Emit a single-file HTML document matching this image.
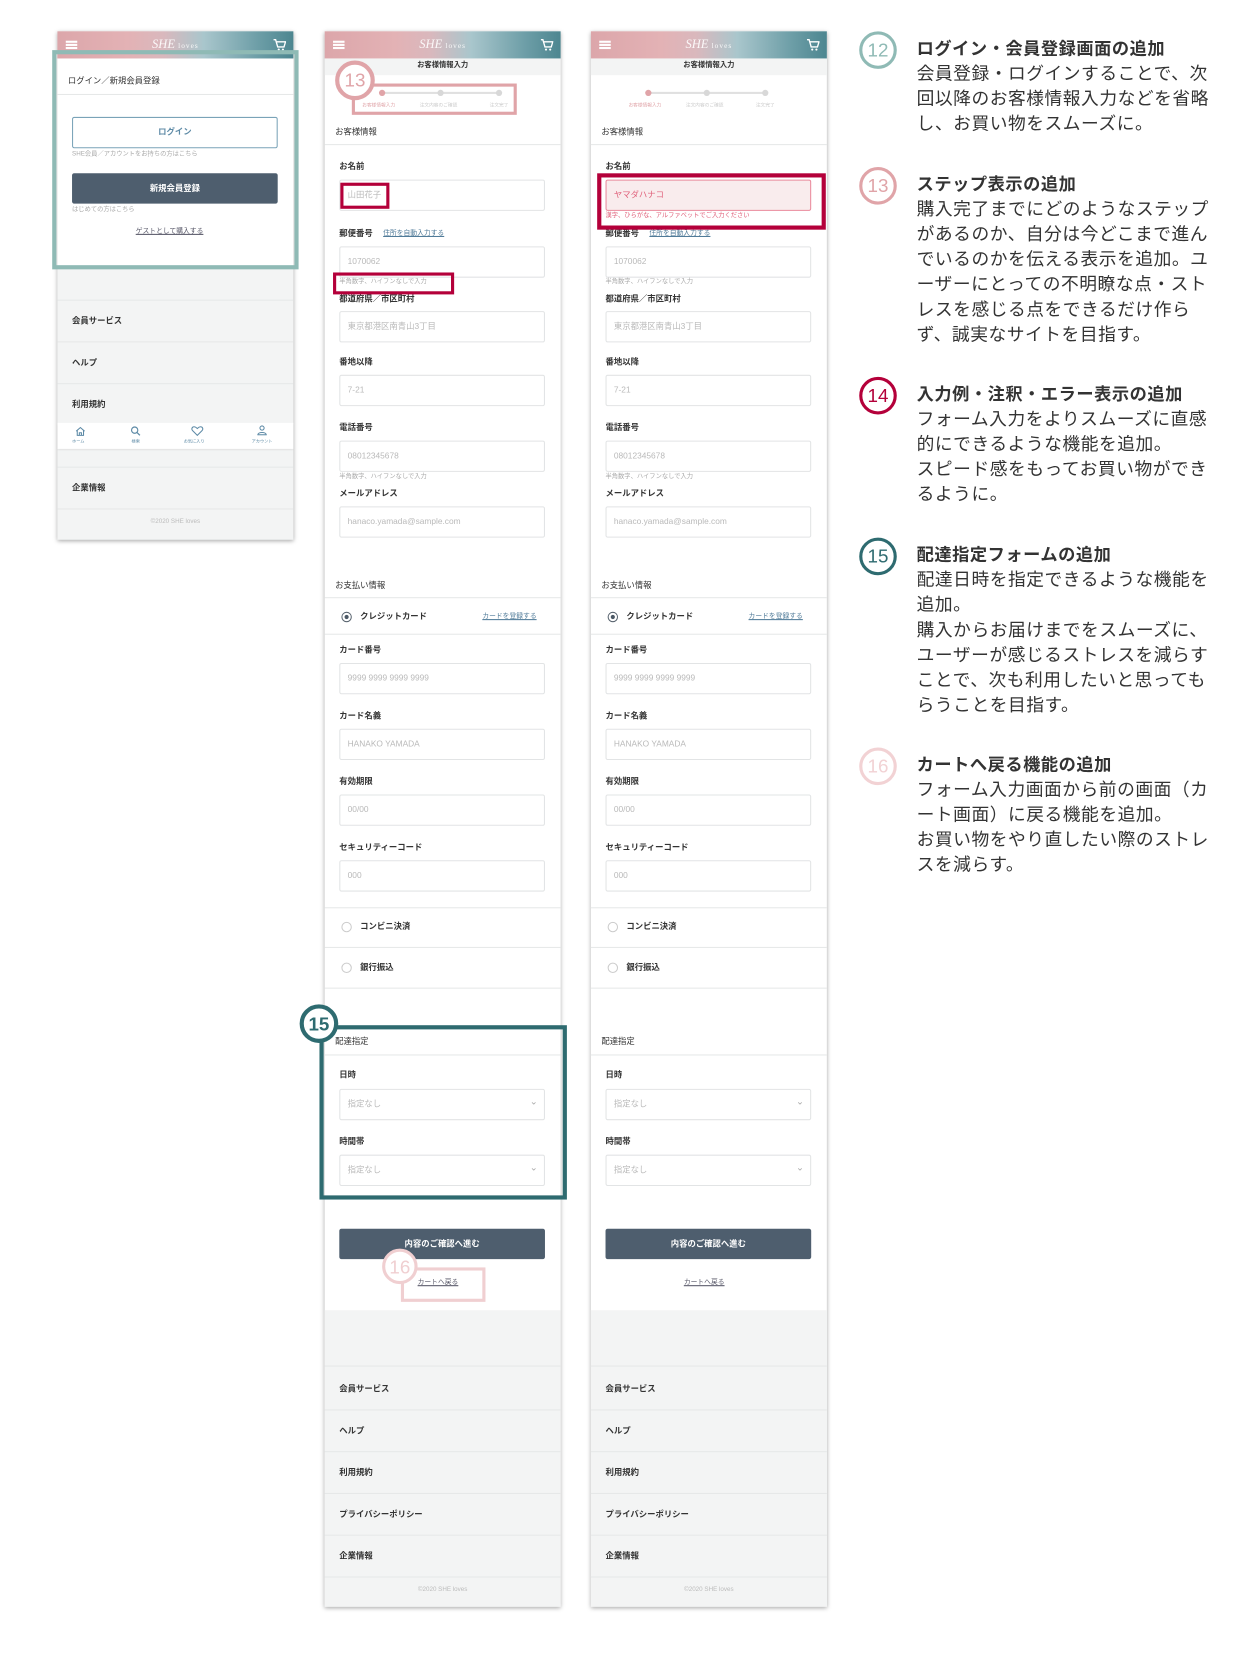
<!DOCTYPE html>
<html><head><meta charset="utf-8">
<style>
html,body{margin:0;padding:0;background:#fff;width:1250px;height:1636px;overflow:hidden}
#w{position:absolute;left:0;top:0;width:1197px;height:1567px;transform:scale(1.044);transform-origin:0 0;font-family:"Liberation Sans","Noto Sans CJK JP",sans-serif;color:#333}
.ph{position:absolute;top:0;width:226px;height:1600px}
.bg{position:absolute;left:0;width:226px;background:#fff}
.shadow{box-shadow:0 1px 4px rgba(0,0,0,.35)}
.hd{position:absolute;left:0;top:30px;width:226px;height:26px;background:linear-gradient(90deg,#dca6aa 0%,#e3b2b5 30%,#d9b8bd 45%,#a9c6cc 62%,#6d9ea7 85%,#4d8690 100%)}
.hd .m{position:absolute;left:8px;top:9px;width:11px;height:1.5px;background:#fff;box-shadow:0 3px 0 #fff,0 6px 0 #fff}
.hd .lg{position:absolute;left:0;width:226px;top:5px;text-align:center;color:#fff;font-family:"Liberation Serif",serif;font-style:italic;font-size:12px;opacity:.9}
.hd .lg span{font-style:normal;font-size:7px;letter-spacing:1px}
.hd svg{position:absolute;right:7px;top:7px}
.t{position:absolute;font-size:8px;line-height:12px;white-space:nowrap}
.b{font-weight:bold}
.l{position:absolute;left:14px;font-size:8px;line-height:12px;font-weight:bold;white-space:nowrap}
.i{position:absolute;left:14px;width:188px;height:28px;border:1px solid #e2e4e5;border-radius:2px;font-size:8px;color:#b9b9b9;padding-left:7px;line-height:28px;background:#fff;white-space:nowrap}
.h{position:absolute;left:14px;font-size:6px;color:#aaa;line-height:8px;white-space:nowrap}
.ln{position:absolute;left:0;width:226px;height:1px;background:#e6e8e8}
.lk{position:absolute;font-size:6.5px;color:#4f7a98;text-decoration:underline;white-space:nowrap;line-height:8px}
.rd{position:absolute;left:16px;width:8px;height:8px;border:1.5px solid #5a6570;border-radius:50%}
.rd.on::after{content:"";position:absolute;left:2px;top:2px;width:4px;height:4px;border-radius:50%;background:#4b5865}
.rd.off{border-color:#ccc}
.gy{position:absolute;left:0;width:226px;background:#f3f4f4}
.sel::after{content:"⌄";position:absolute;right:6px;top:-3px;font-size:9px;color:#aaa}
.btn{position:absolute;left:14px;width:197px;height:29px;background:#4e5e6e;color:#fff;font-size:8px;font-weight:bold;text-align:center;line-height:29px;border-radius:2px}
.cir{position:absolute;width:30px;height:30px;border-radius:50%;border:3px solid;background:#fff;text-align:center;line-height:30px;font-size:18px;font-family:"Liberation Sans",sans-serif}
.box{position:absolute;border-style:solid}
.rt{position:absolute;left:878px;width:286px;font-size:17px;line-height:24px;color:#333;letter-spacing:0.5px}
.rt b{display:block;font-size:16.5px;letter-spacing:0.5px}
.ft{position:absolute;left:0;width:226px;text-align:center;font-size:6px;color:#bbb}
</style></head><body><div id="w">

<!-- PHONE 1 -->
<div class="ph" style="left:55px">
 <div class="bg shadow" style="top:30px;height:487px;background:#f3f4f4"></div>
 <div class="bg" style="top:56px;height:202px"></div>
 <div class="hd"><div class="m"></div><div class="lg">SHE <span>loves</span></div><svg width="12" height="12" viewBox="0 0 12 12"><path d="M0 1h2l2 7h6l1.5-5H3" fill="none" stroke="#fff" stroke-width="1.3"/><circle cx="5" cy="10.5" r="1" fill="#fff"/><circle cx="9" cy="10.5" r="1" fill="#fff"/></svg></div>
 <div class="t" style="left:10px;top:72px">ログイン／新規会員登録</div>
 <div class="ln" style="top:90px"></div>
 <div style="position:absolute;left:14px;top:112px;width:195px;height:28px;border:1px solid #7aa3b8;border-radius:2px;text-align:center;line-height:28px;font-size:8px;font-weight:bold;color:#5d8aa6">ログイン</div>
 <div class="h" style="top:144px">SHE会員／アカウントをお持ちの方はこちら</div>
 <div class="btn" style="top:166px">新規会員登録</div>
 <div class="h" style="top:197px">はじめての方はこちら</div>
 <div class="lk" style="left:75px;top:218px;color:#556">ゲストとして購入する</div>
 <div class="ln" style="top:287px"></div>
 <div class="t b" style="left:14px;top:302px">会員サービス</div>
 <div class="ln" style="top:327px"></div>
 <div class="t b" style="left:14px;top:342px">ヘルプ</div>
 <div class="ln" style="top:367px"></div>
 <div class="t b" style="left:14px;top:382px">利用規約</div>
 <div style="position:absolute;left:0;top:405px;width:226px;height:25px;background:#fff;box-shadow:0 1px 2px rgba(0,0,0,.1)">
  <svg style="position:absolute;left:17px;top:3px" width="10" height="10" viewBox="0 0 10 10"><path d="M1 5L5 1.5 9 5M2 4.5V9h6V4.5M4 9V6.5h2V9" fill="none" stroke="#5d8aa6" stroke-width="1"/></svg>
  <svg style="position:absolute;left:70px;top:3px" width="10" height="10" viewBox="0 0 10 10"><circle cx="4" cy="4" r="3" fill="none" stroke="#5d8aa6" stroke-width="1.1"/><path d="M6.3 6.3L9 9" stroke="#5d8aa6" stroke-width="1.2"/></svg>
  <svg style="position:absolute;left:128px;top:3px" width="12" height="10" viewBox="0 0 12 10"><path d="M6 9L1.5 4.5C0 3 1 .8 3 .8 4.5.8 5.5 2 6 2.5 6.5 2 7.5.8 9 .8c2 0 3 2.2 1.5 3.7z" fill="none" stroke="#5d8aa6" stroke-width="1"/></svg>
  <svg style="position:absolute;left:191px;top:2px" width="10" height="10" viewBox="0 0 10 10"><circle cx="5" cy="3" r="2" fill="none" stroke="#5d8aa6" stroke-width="1"/><path d="M1 9.5C1 6.5 9 6.5 9 9.5z" fill="none" stroke="#5d8aa6" stroke-width="1"/></svg>
  <div style="position:absolute;top:15px;left:0;width:226px;font-size:4px;color:#5d8aa6"><span style="position:absolute;left:14px">ホーム</span><span style="position:absolute;left:71px">検索</span><span style="position:absolute;left:121px">お気に入り</span><span style="position:absolute;left:186px">アカウント</span></div>
 </div>
 <div class="ln" style="top:447px"></div>
 <div class="t b" style="left:14px;top:462px">企業情報</div>
 <div class="ln" style="top:487px"></div>
 <div class="ft" style="top:497px">©2020 SHE loves</div>
</div>
<div class="box" style="left:50px;top:48px;width:228px;height:202px;border-width:4px;border-color:#8fbab5"></div>

<!-- PHONE 2 -->
<div class="ph" style="left:311px">
 <div class="bg shadow" style="top:30px;height:1509px"></div>
 <div class="gy" style="top:1255px;height:284px"></div>
 <div class="hd"><div class="m"></div><div class="lg">SHE <span>loves</span></div><svg width="12" height="12" viewBox="0 0 12 12"><path d="M0 1h2l2 7h6l1.5-5H3" fill="none" stroke="#fff" stroke-width="1.3"/><circle cx="5" cy="10.5" r="1" fill="#fff"/><circle cx="9" cy="10.5" r="1" fill="#fff"/></svg></div>
 <div class="gy" style="top:56px;height:16px"></div>
 <div class="t b" style="left:0;width:226px;text-align:center;top:57px;font-size:7px">お客様情報入力</div>
 <div style="position:absolute;left:55px;top:88px;width:112px;height:2px;background:#e0e0e0"></div>
 <div style="position:absolute;left:52px;top:86px;width:6px;height:6px;border-radius:50%;background:#e0a4a8"></div>
 <div style="position:absolute;left:108px;top:86px;width:6px;height:6px;border-radius:50%;background:#d8d8d8"></div>
 <div style="position:absolute;left:164px;top:86px;width:6px;height:6px;border-radius:50%;background:#d8d8d8"></div>
 <div class="t" style="left:36px;top:97px;font-size:4.5px;color:#e0a4a8;line-height:8px">お客様情報入力</div>
 <div class="t" style="left:91px;top:97px;font-size:4.5px;color:#ccc;line-height:8px">注文内容のご確認</div>
 <div class="t" style="left:158px;top:97px;font-size:4.5px;color:#ccc;line-height:8px">注文完了</div>
 <div class="t" style="left:10px;top:121px">お客様情報</div>
 <div class="ln" style="top:138px"></div>
 <div class="l" style="top:154px">お名前</div>
 <div class="i" style="top:172px">山田花子</div>
 <div class="l" style="top:218px">郵便番号</div><div class="lk" style="left:56px;top:220px">住所を自動入力する</div>
 <div class="i" style="top:236px">1070062</div>
 <div class="h" style="top:266px">半角数字、ハイフンなしで入力</div>
 <div class="l" style="top:281px">都道府県／市区町村</div>
 <div class="i" style="top:298px">東京都港区南青山3丁目</div>
 <div class="l" style="top:341px">番地以降</div>
 <div class="i" style="top:359px">7-21</div>
 <div class="l" style="top:404px">電話番号</div>
 <div class="i" style="top:422px">08012345678</div>
 <div class="h" style="top:453px">半角数字、ハイフンなしで入力</div>
 <div class="l" style="top:467px">メールアドレス</div>
 <div class="i" style="top:485px">hanaco.yamada@sample.com</div>
 <div class="t" style="left:10px;top:555px">お支払い情報</div>
 <div class="ln" style="top:572px"></div>
 <div class="rd on" style="top:586px"></div><div class="t b" style="left:34px;top:585px">クレジットカード</div><div class="lk" style="left:151px;top:587px">カードを登録する</div>
 <div class="ln" style="top:607px"></div>
 <div class="l" style="top:617px">カード番号</div>
 <div class="i" style="top:635px">9999 9999 9999 9999</div>
 <div class="l" style="top:680px">カード名義</div>
 <div class="i" style="top:698px">HANAKO YAMADA</div>
 <div class="l" style="top:743px">有効期限</div>
 <div class="i" style="top:761px">00/00</div>
 <div class="l" style="top:806px">セキュリティーコード</div>
 <div class="i" style="top:824px">000</div>
 <div class="ln" style="top:869px"></div>
 <div class="rd off" style="top:883px"></div><div class="t b" style="left:34px;top:882px">コンビニ決済</div>
 <div class="ln" style="top:907px"></div>
 <div class="rd off" style="top:922px"></div><div class="t b" style="left:34px;top:921px">銀行振込</div>
 <div class="ln" style="top:946px"></div>
 <div class="t" style="left:10px;top:992px">配達指定</div>
 <div class="ln" style="top:1010px"></div>
 <div class="l" style="top:1024px">日時</div>
 <div class="i sel" style="top:1043px">指定なし</div>
 <div class="l" style="top:1088px">時間帯</div>
 <div class="i sel" style="top:1106px">指定なし</div>
 <div class="btn" style="top:1177px">内容のご確認へ進む</div>
 <div class="lk" style="left:89px;top:1225px;color:#556">カートへ戻る</div>
 <div class="ln" style="top:1308px"></div>
 <div class="t b" style="left:14px;top:1325px">会員サービス</div>
 <div class="ln" style="top:1350px"></div>
 <div class="t b" style="left:14px;top:1365px">ヘルプ</div>
 <div class="ln" style="top:1390px"></div>
 <div class="t b" style="left:14px;top:1405px">利用規約</div>
 <div class="ln" style="top:1430px"></div>
 <div class="t b" style="left:14px;top:1445px">プライバシーポリシー</div>
 <div class="ln" style="top:1470px"></div>
 <div class="t b" style="left:14px;top:1485px">企業情報</div>
 <div class="ln" style="top:1510px"></div>
 <div class="ft" style="top:1520px">©2020 SHE loves</div>
</div>
<div class="box" style="left:337px;top:80px;width:152px;height:24px;border-width:3px;border-color:#e0a4a8"></div>
<div class="cir" style="left:321px;top:58px;width:30px;height:30px;border-color:#e0a4a8;color:#e0a4a8;border-width:4px">13</div>
<div class="box" style="left:326px;top:175px;width:41px;height:19px;border-width:3px;border-color:#b4003a"></div>
<div class="box" style="left:319px;top:261px;width:110px;height:15px;border-width:3px;border-color:#b4003a"></div>
<div class="box" style="left:306px;top:982px;width:229px;height:159px;border-width:4px;border-color:#2e6b70"></div>
<div class="cir" style="left:287px;top:962px;width:29px;height:29px;border-color:#2e6b70;color:#2e6b70;border-width:4px;font-weight:bold">15</div>
<div class="box" style="left:384px;top:1214px;width:75px;height:27px;border-width:3px;border-color:#f0cfd1"></div>
<div class="cir" style="left:366px;top:1196px;width:28px;height:28px;border-color:#f0cfd1;color:#f0cfd1;border-width:3px">16</div>

<!-- PHONE 3 -->
<div class="ph" style="left:566px">
 <div class="bg shadow" style="top:30px;height:1509px"></div>
 <div class="gy" style="top:1255px;height:284px"></div>
 <div class="hd"><div class="m"></div><div class="lg">SHE <span>loves</span></div><svg width="12" height="12" viewBox="0 0 12 12"><path d="M0 1h2l2 7h6l1.5-5H3" fill="none" stroke="#fff" stroke-width="1.3"/><circle cx="5" cy="10.5" r="1" fill="#fff"/><circle cx="9" cy="10.5" r="1" fill="#fff"/></svg></div>
 <div class="gy" style="top:56px;height:16px"></div>
 <div class="t b" style="left:0;width:226px;text-align:center;top:57px;font-size:7px">お客様情報入力</div>
 <div style="position:absolute;left:55px;top:88px;width:112px;height:2px;background:#e0e0e0"></div>
 <div style="position:absolute;left:52px;top:86px;width:6px;height:6px;border-radius:50%;background:#e0a4a8"></div>
 <div style="position:absolute;left:108px;top:86px;width:6px;height:6px;border-radius:50%;background:#d8d8d8"></div>
 <div style="position:absolute;left:164px;top:86px;width:6px;height:6px;border-radius:50%;background:#d8d8d8"></div>
 <div class="t" style="left:36px;top:97px;font-size:4.5px;color:#e0a4a8;line-height:8px">お客様情報入力</div>
 <div class="t" style="left:91px;top:97px;font-size:4.5px;color:#ccc;line-height:8px">注文内容のご確認</div>
 <div class="t" style="left:158px;top:97px;font-size:4.5px;color:#ccc;line-height:8px">注文完了</div>
 <div class="t" style="left:10px;top:121px">お客様情報</div>
 <div class="ln" style="top:138px"></div>
 <div class="l" style="top:154px">お名前</div>
 <div class="i" style="top:172px;background:#f9eced;border-color:#e98a9c;color:#e0607a">ヤマダハナコ</div>
 <div class="h" style="top:203px;color:#e0607a">漢字、ひらがな、アルファベットでご入力ください</div>
 <div class="l" style="top:218px">郵便番号</div><div class="lk" style="left:56px;top:220px">住所を自動入力する</div>
 <div class="i" style="top:236px">1070062</div>
 <div class="h" style="top:266px">半角数字、ハイフンなしで入力</div>
 <div class="l" style="top:281px">都道府県／市区町村</div>
 <div class="i" style="top:298px">東京都港区南青山3丁目</div>
 <div class="l" style="top:341px">番地以降</div>
 <div class="i" style="top:359px">7-21</div>
 <div class="l" style="top:404px">電話番号</div>
 <div class="i" style="top:422px">08012345678</div>
 <div class="h" style="top:453px">半角数字、ハイフンなしで入力</div>
 <div class="l" style="top:467px">メールアドレス</div>
 <div class="i" style="top:485px">hanaco.yamada@sample.com</div>
 <div class="t" style="left:10px;top:555px">お支払い情報</div>
 <div class="ln" style="top:572px"></div>
 <div class="rd on" style="top:586px"></div><div class="t b" style="left:34px;top:585px">クレジットカード</div><div class="lk" style="left:151px;top:587px">カードを登録する</div>
 <div class="ln" style="top:607px"></div>
 <div class="l" style="top:617px">カード番号</div>
 <div class="i" style="top:635px">9999 9999 9999 9999</div>
 <div class="l" style="top:680px">カード名義</div>
 <div class="i" style="top:698px">HANAKO YAMADA</div>
 <div class="l" style="top:743px">有効期限</div>
 <div class="i" style="top:761px">00/00</div>
 <div class="l" style="top:806px">セキュリティーコード</div>
 <div class="i" style="top:824px">000</div>
 <div class="ln" style="top:869px"></div>
 <div class="rd off" style="top:883px"></div><div class="t b" style="left:34px;top:882px">コンビニ決済</div>
 <div class="ln" style="top:907px"></div>
 <div class="rd off" style="top:922px"></div><div class="t b" style="left:34px;top:921px">銀行振込</div>
 <div class="ln" style="top:946px"></div>
 <div class="t" style="left:10px;top:992px">配達指定</div>
 <div class="ln" style="top:1010px"></div>
 <div class="l" style="top:1024px">日時</div>
 <div class="i sel" style="top:1043px">指定なし</div>
 <div class="l" style="top:1088px">時間帯</div>
 <div class="i sel" style="top:1106px">指定なし</div>
 <div class="btn" style="top:1177px">内容のご確認へ進む</div>
 <div class="lk" style="left:89px;top:1225px;color:#556">カートへ戻る</div>
 <div class="ln" style="top:1308px"></div>
 <div class="t b" style="left:14px;top:1325px">会員サービス</div>
 <div class="ln" style="top:1350px"></div>
 <div class="t b" style="left:14px;top:1365px">ヘルプ</div>
 <div class="ln" style="top:1390px"></div>
 <div class="t b" style="left:14px;top:1405px">利用規約</div>
 <div class="ln" style="top:1430px"></div>
 <div class="t b" style="left:14px;top:1445px">プライバシーポリシー</div>
 <div class="ln" style="top:1470px"></div>
 <div class="t b" style="left:14px;top:1485px">企業情報</div>
 <div class="ln" style="top:1510px"></div>
 <div class="ft" style="top:1520px">©2020 SHE loves</div>
</div>
<div class="box" style="left:572px;top:166px;width:211px;height:46px;border-width:4px;border-color:#b4003a"></div>

<!-- RIGHT TEXT -->
<div class="cir" style="left:823px;top:30px;border-color:#8fbab5;color:#8fbab5">12</div>
<div class="rt" style="top:35px"><b>ログイン・会員登録画面の追加</b>会員登録・ログインすることで、次回以降のお客様情報入力などを省略し、お買い物をスムーズに。</div>
<div class="cir" style="left:823px;top:160px;border-color:#e0a4a8;color:#e0a4a8">13</div>
<div class="rt" style="top:165px"><b>ステップ表示の追加</b>購入完了までにどのようなステップがあるのか、自分は今どこまで進んでいるのかを伝える表示を追加。ユーザーにとっての不明瞭な点・ストレスを感じる点をできるだけ作らず、誠実なサイトを目指す。</div>
<div class="cir" style="left:823px;top:361px;border-color:#b4003a;color:#b4003a">14</div>
<div class="rt" style="top:366px"><b>入力例・注釈・エラー表示の追加</b>フォーム入力をよりスムーズに直感的にできるような機能を追加。<br>スピード感をもってお買い物ができるように。</div>
<div class="cir" style="left:823px;top:515px;border-color:#2e6b70;color:#2e6b70">15</div>
<div class="rt" style="top:520px"><b>配達指定フォームの追加</b>配達日時を指定できるような機能を追加。<br>購入からお届けまでをスムーズに、ユーザーが感じるストレスを減らすことで、次も利用したいと思ってもらうことを目指す。</div>
<div class="cir" style="left:823px;top:716px;border-color:#f2d2d4;color:#f2d2d4">16</div>
<div class="rt" style="top:721px"><b>カートへ戻る機能の追加</b>フォーム入力画面から前の画面（カート画面）に戻る機能を追加。<br>お買い物をやり直したい際のストレスを減らす。</div>

</div></body></html>
